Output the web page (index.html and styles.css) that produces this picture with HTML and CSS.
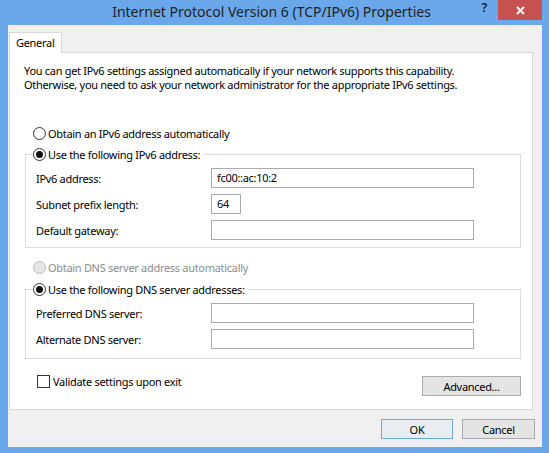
FILE: index.html
```html
<!DOCTYPE html>
<html>
<head>
<meta charset="utf-8">
<title>Internet Protocol Version 6 (TCP/IPv6) Properties</title>
<link rel="stylesheet" href="styles.css">
</head>
<body>
<div class="window">
  <div class="titlebar">
    <div class="title">Internet Protocol Version 6 (TCP/IPv6) Properties</div>
    <div class="controls">
      <span class="help">?</span>
      <span class="close"><svg width="9" height="9" viewBox="0 0 9 9"><path d="M1 1 L8 8 M8 1 L1 8" stroke="#fff" stroke-width="1.8" fill="none"/></svg></span>
    </div>
  </div>
  <div class="client">
    <div class="tabs"><div class="tab">General</div></div>
    <div class="panel">
      <p class="desc">You can get IPv6 settings assigned automatically if your network supports this capability.<br>Otherwise, you need to ask your network administrator for the appropriate IPv6 settings.</p>
      <div class="option first"><span class="radio"></span><span>Obtain an IPv6 address automatically</span></div>
      <fieldset class="group g1">
        <legend><span class="radio checked"></span><span>Use the following IPv6 address:</span></legend>
        <div class="field"><span class="lbl">IPv6 address:</span><span class="input">fc00::ac:10:2</span></div>
        <div class="field"><span class="lbl">Subnet prefix length:</span><span class="input short">64</span></div>
        <div class="field"><span class="lbl">Default gateway:</span><span class="input"></span></div>
      </fieldset>
      <div class="option disabled"><span class="radio"></span><span>Obtain DNS server address automatically</span></div>
      <fieldset class="group g2">
        <legend><span class="radio checked"></span><span>Use the following DNS server addresses:</span></legend>
        <div class="field"><span class="lbl">Preferred DNS server:</span><span class="input"></span></div>
        <div class="field"><span class="lbl">Alternate DNS server:</span><span class="input"></span></div>
      </fieldset>
      <div class="panel-foot">
        <div class="check"><span class="box"></span><span>Validate settings upon exit</span></div>
        <span class="btn adv">Advanced...</span>
      </div>
    </div>
    <div class="footer">
      <span class="btn ok">OK</span>
      <span class="btn cancel">Cancel</span>
    </div>
  </div>
</div>
</body>
</html>
```

FILE: styles.css
```css
* { box-sizing: border-box; }
html, body { margin: 0; padding: 0; }
body {
  font-family: "Noto Sans", "Open Sans", sans-serif;
  font-size: 11px;
  letter-spacing: -0.3px;
  color: #000;
  background: #6ba7eb;
}
.window {
  width: 549px;
  height: 453px;
  background: #6ba7eb;
  display: flex;
  flex-direction: column;
}
.titlebar {
  height: 25px;
  display: grid;
  flex: none;
}
.title {
  grid-area: 1 / 1;
  justify-self: center;
  margin-right: 6px;
  font-size: 14px;
  letter-spacing: 0;
  line-height: 23px;
  color: #222;
}
.controls {
  grid-area: 1 / 1;
  justify-self: end;
  align-self: start;
  display: flex;
  align-items: flex-start;
  margin-right: 7px;
}
.help {
  font-size: 12px;
  font-weight: bold;
  color: #1b2b4c;
  line-height: 12px;
  margin-top: 2px;
  margin-right: 11px;
}
.close {
  width: 44px;
  height: 20px;
  background: #c75050;
  display: flex;
  align-items: center;
  justify-content: center;
}
.client {
  flex: 1;
  margin: 0 7px 6px 8px;
  background: #f0f0f0;
  padding: 7px 0 0 1px;
  display: flex;
  flex-direction: column;
}
.tabs { height: 20px; display: flex; }
.tab {
  position: relative;
  z-index: 1;
  height: 21px;
  width: 53px;
  background: #fff;
  border: 1px solid #d9d9d9;
  border-bottom: none;
  padding-left: 6px;
  line-height: 19px;
}
.panel {
  margin-right: 9px;
  background: #fff;
  border: 1px solid #d9d9d9;
  padding: 0 0 13px 0;
}
.desc {
  margin: 11px 0 0 14px;
  line-height: 14px;
}
.option {
  display: flex;
  align-items: center;
  height: 14px;
  margin-left: 23px;
  gap: 2px;
}
.option.first { margin-top: 34px; }
.option.disabled { margin-top: 12px; color: #8d8d8d; }
.radio {
  width: 13px;
  height: 13px;
  border: 1px solid #333;
  border-radius: 50%;
  background: #fff;
  display: flex;
  align-items: center;
  justify-content: center;
  flex: none;
}
.radio.checked::after {
  content: "";
  width: 7px;
  height: 7px;
  border-radius: 50%;
  background: #111;
}
.disabled .radio { border-color: #bcbcbc; background: #e6e6e6; }
.group {
  margin: 7px 11px 0 15px;
  border: 1px solid #dcdcdc;
  padding: 7px 0 7px 0;
  min-width: 0;
}
.group.g2 { margin-top: 8px; padding-bottom: 9px; }
.group legend {
  display: flex;
  align-items: center;
  gap: 2px;
  height: 14px;
  margin-left: 7px;
  padding: 0 3px 0 0;
}
.field {
  display: flex;
  align-items: center;
  height: 20px;
  padding-left: 10px;
}
.field + .field { margin-top: 6px; }
.lbl { width: 175px; flex: none; }
.input {
  width: 263px;
  height: 20px;
  border: 1px solid #ababab;
  background: #fff;
  padding-left: 5px;
  line-height: 18px;
}
.input.short { width: 30px; }
.panel-foot {
  display: flex;
  justify-content: space-between;
  align-items: flex-start;
  margin: 17px 11px 0 27px;
}
.check {
  display: flex;
  align-items: center;
  gap: 3px;
  margin-top: -2px;
}
.box {
  width: 13px;
  height: 13px;
  border: 1px solid #333;
  background: #fff;
  flex: none;
}
.btn {
  display: flex;
  align-items: center;
  justify-content: center;
  height: 20px;
  background: #e4e4e4;
  border: 1px solid #acacac;
  color: #000;
}
.adv { width: 99px; }
.footer {
  display: flex;
  justify-content: flex-end;
  gap: 9px;
  margin-top: 9px;
  padding-right: 7px;
}
.ok { width: 72px; border-color: #6fa9e3; background: #e9edf1; }
.cancel { width: 73px; }
```
